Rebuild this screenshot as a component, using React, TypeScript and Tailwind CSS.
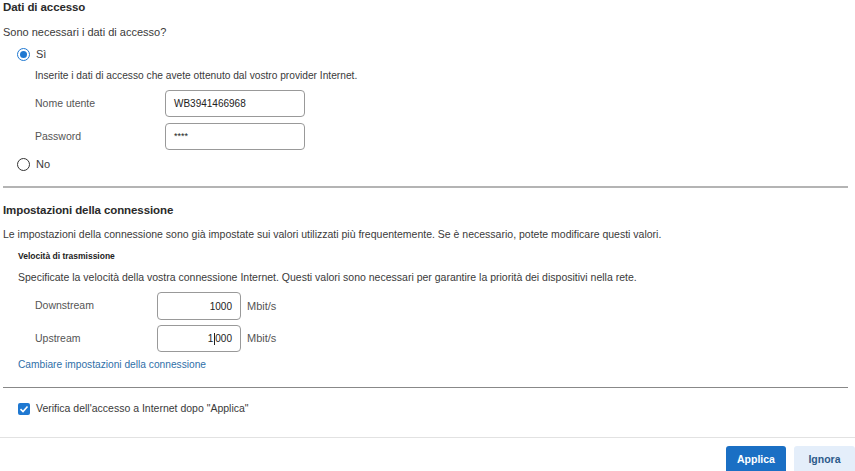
import React from "react";

const font = { fontFamily: '"Liberation Sans", Arial, sans-serif' };

function Radio({ checked }: { checked: boolean }) {
  return checked ? (
    <span className="w-[13px] h-[13px] rounded-full border-[1.5px] border-[#1f78d1] flex items-center justify-center">
      <span className="w-[7px] h-[7px] rounded-full bg-[#1f78d1]" />
    </span>
  ) : (
    <span className="w-[13px] h-[13px] rounded-full border-[1.5px] border-[#333]" />
  );
}

export default function App() {
  return (
    <div className="w-[855px] h-[471px] bg-white overflow-hidden text-[#3a3a3a] text-[11px]" style={font}>
      <div className="h-[16px] flex items-center pl-[3px] text-[11.5px] tracking-[-0.1px] text-[#2a2a2a] font-bold">Dati di accesso</div>
      <div className="mt-[8px] h-[16px] flex items-center pl-[3px]">Sono necessari i dati di accesso?</div>
      <div className="mt-[6px] h-[16px] flex items-center pl-[17px] gap-[6px]">
        <Radio checked />
        <span>Sì</span>
      </div>
      <div className="mt-[6px] h-[16px] flex items-center pl-[35px] text-[10.2px]">
        Inserite i dati di accesso che avete ottenuto dal vostro provider Internet.
      </div>
      <div className="mt-[6px] h-[27px] flex items-center pl-[35px]">
        <span className="w-[130px] text-[#555] text-[10.5px]">Nome utente</span>
        <div className="w-[140px] h-[27px] border border-[#999] rounded-[4px] flex items-center pl-[8px] text-[#222] text-[10px]">WB3941466968</div>
      </div>
      <div className="mt-[6px] h-[27px] flex items-center pl-[35px]">
        <span className="w-[130px] text-[#555] text-[10.5px]">Password</span>
        <div className="w-[140px] h-[27px] border border-[#999] rounded-[4px] flex items-center pl-[8px] text-[#222] text-[9px]">****</div>
      </div>
      <div className="mt-[6px] h-[16px] flex items-center pl-[17px] gap-[6px]">
        <Radio checked={false} />
        <span>No</span>
      </div>
      <div className="mt-[14px] ml-[3px] w-[845px] h-[1.5px] bg-[#b4b4b4]" />
      <div className="mt-[15.5px] h-[16px] flex items-center pl-[3px] text-[11.5px] tracking-[-0.1px] text-[#2a2a2a] font-bold">Impostazioni della connessione</div>
      <div className="mt-[8px] h-[16px] flex items-center pl-[3px] text-[10.5px]">
        Le impostazioni della connessione sono già impostate sui valori utilizzati più frequentemente. Se è necessario, potete modificare questi valori.
      </div>
      <div className="mt-[5px] h-[16px] flex items-center pl-[18px] text-[8.5px] font-bold text-[#222]">Velocità di trasmissione</div>
      <div className="mt-[6px] h-[16px] flex items-center pl-[18px] text-[10.5px]">
        Specificate la velocità della vostra connessione Internet. Questi valori sono necessari per garantire la priorità dei dispositivi nella rete.
      </div>
      <div className="mt-[6px] h-[28px] flex items-center pl-[35px]">
        <span className="w-[122px] text-[#555] text-[10.5px]">Downstream</span>
        <div className="w-[84px] h-[28px] border border-[#999] rounded-[4px] flex items-center justify-end pr-[8px] text-[#222] text-[10px]">1000</div>
        <span className="ml-[6px] text-[#555]">Mbit/s</span>
      </div>
      <div className="mt-[5px] h-[27px] flex items-center pl-[35px]">
        <span className="w-[122px] text-[#555] text-[10.5px]">Upstream</span>
        <div className="w-[84px] h-[27px] border border-[#999] rounded-[4px] flex items-center justify-end pr-[8px] text-[#222] text-[10px]">
          1<span className="inline-block w-[1px] h-[12px] bg-[#222] mx-[0.5px]" />000
        </div>
        <span className="ml-[6px] text-[#555]">Mbit/s</span>
      </div>
      <div className="mt-[5px] h-[16px] flex items-center pl-[18px] text-[10.2px] text-[#2f6fa8]">Cambiare impostazioni della connessione</div>
      <div className="mt-[14px] ml-[3px] w-[845px] h-[1px] bg-[#888]" />
      <div className="mt-[13px] h-[16px] flex items-center pl-[18px] gap-[6px]">
        <span className="w-[12px] h-[12px] rounded-[2px] bg-[#1f78d1] flex items-center justify-center">
          <svg width="10" height="10" viewBox="0 0 10 10">
            <path d="M1.5 5.2 L4 7.5 L8.5 2.5" fill="none" stroke="white" strokeWidth="1.6" />
          </svg>
        </span>
        <span className="text-[10.5px]">Verifica dell'accesso a Internet dopo "Applica"</span>
      </div>
      <div className="mt-[20px] w-full h-[1px] bg-[#e2e2e2]" />
      <div className="mt-[8px] flex justify-end gap-[8px]">
        <button className="w-[60px] h-[28px] rounded-[3px] bg-[#1a6fc4] text-white font-bold text-[10.5px]">Applica</button>
        <button className="w-[61px] h-[28px] rounded-[3px] bg-[#e4eefa] text-[#2c5a8a] font-bold text-[10.5px]">Ignora</button>
      </div>
    </div>
  );
}
